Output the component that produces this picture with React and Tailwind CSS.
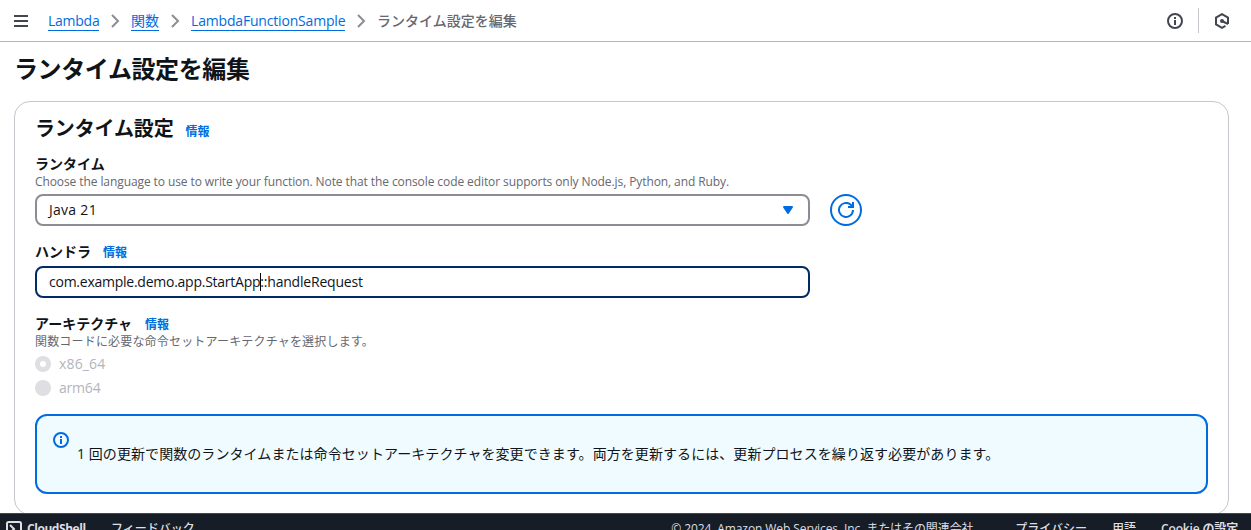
import React from 'react';

const FONT = "font-['Open_Sans','Noto_Sans_CJK_JP',sans-serif]";

function Chevron() {
  return (
    <svg width="16" height="16" viewBox="0 0 16 16" fill="none" stroke="#8c8c94" strokeWidth="2" className="shrink-0">
      <path d="M5 2l6 6-6 6" />
    </svg>
  );
}

function InfoIcon({ className }) {
  return (
    <svg width="16" height="16" viewBox="0 0 16 16" className={className} fill="none" stroke="currentColor" strokeWidth="2">
      <circle cx="8" cy="8" r="7" />
      <path d="M8 12V7M8 6V4" />
    </svg>
  );
}

function InfoLink({ className = '' }) {
  return <a className={`text-[12px] font-bold text-[#006ce0] ${className}`}>情報</a>;
}

function Crumb({ children, className }) {
  return (
    <a className={`h-5 shrink-0 whitespace-nowrap border-b border-[#006ce0] text-[#006ce0] ${className}`}>{children}</a>
  );
}

function Header() {
  return (
    <header className="flex h-[42px] shrink-0 items-center border-b border-[#b4b4bb] pr-[21px] pl-[14px]">
      <svg width="14" height="16" viewBox="0 0 14 16" stroke="#424650" strokeWidth="2">
        <path d="M0 3h14M0 8h14M0 13h14" />
      </svg>
      <nav className="ml-5 flex items-center text-[14px] leading-[19px]">
        <Crumb className="w-[51px] tracking-[-0.25px]">Lambda</Crumb>
        <div className="flex w-8 justify-center"><Chevron /></div>
        <Crumb className="w-7">関数</Crumb>
        <div className="flex w-8 justify-center"><Chevron /></div>
        <Crumb className="w-[154px] tracking-[-0.18px]">LambdaFunctionSample</Crumb>
        <div className="flex w-8 justify-center"><Chevron /></div>
        <span className="h-5 font-medium text-[#656871]">ランタイム設定を編集</span>
      </nav>
      <div className="ml-auto flex items-center">
        <InfoIcon className="text-[#424650]" />
        <div className="mx-[15px] h-[25px] w-px bg-[#c6c6cd]" />
        <svg width="16" height="16" viewBox="0 0 16 16" fill="none" stroke="#424650" strokeWidth="2">
          <path d="M14 11V4.6L8 1.2 2 4.6v6.8l6 3.4 3.4-1.9" />
          <path d="M8 8l6 3" />
          <circle cx="8" cy="8" r="1" fill="#424650" />
        </svg>
      </div>
    </header>
  );
}

function Radio({ checked, className, children }) {
  return (
    <div className="flex h-6 items-center gap-2 text-[14px] text-[#b4b4bb]">
      <span className="flex size-4 items-center justify-center rounded-full bg-[#dedee3]">
        {checked && <span className="size-1.5 rounded-full bg-white" />}
      </span>
      <span className={`pb-px ${className}`}>{children}</span>
    </div>
  );
}

function Footer() {
  return (
    <footer className="h-[17px] shrink-0 overflow-hidden border-t border-[#424650] bg-[#161d26] text-[12px] leading-4 text-[#dedee3]">
      <div className="flex h-[30px] items-center pr-[14px] pl-[6px]">
        <svg width="16" height="16" viewBox="0 0 16 16" fill="none" stroke="#dedee3" strokeWidth="2">
          <rect x="1" y="1" width="14" height="14" rx="1.5" />
          <path d="M4 4l4 4-4 4M8 12h4" />
        </svg>
        <span className="ml-[5px] w-[59px] font-bold tracking-[-0.45px] whitespace-nowrap">CloudShell</span>
        <span className="ml-[25px] font-medium">フィードバック</span>
        <div className="ml-auto flex items-center whitespace-nowrap">
          <span className="w-[302px] tracking-[-0.09px]">© 2024, Amazon Web Services, Inc. またはその関連会社</span>
          <span className="ml-[42px] font-medium">プライバシー</span>
          <span className="ml-[25px] font-medium">用語</span>
          <span className="ml-[25px] w-[76px] font-semibold tracking-[-0.15px]">Cookie の設定</span>
        </div>
      </div>
    </footer>
  );
}

export default function App() {
  return (
    <div className={`flex h-[530px] w-full flex-col overflow-hidden bg-white text-[#0f141a] ${FONT}`}>
      <Header />
      <main className="min-h-0 flex-1 overflow-hidden pr-[22px] pl-[14px]">
        <h1 className="mt-3 h-[30px] text-[24px] leading-[30px] font-bold tracking-[-0.4px]">ランタイム設定を編集</h1>
        <section className="mt-[17px] h-[414px] rounded-2xl border border-[#c6c6cd] px-5 pt-[15px]">
          <div className="flex h-6 items-baseline gap-3">
            <h2 className="text-[20px] leading-6 font-bold tracking-[-0.15px]">ランタイム設定</h2>
            <InfoLink />
          </div>
          <div className="mt-[13px] h-5 text-[14px] leading-5 font-bold">ランタイム</div>
          <p className="h-4 text-[12px] leading-4 tracking-[-0.09px] whitespace-nowrap text-[#656871]">
            Choose the language to use to write your function. Note that the console code editor supports only Node.js, Python, and Ruby.
          </p>
          <div className="mt-1 flex gap-5">
            <div className="flex h-8 w-[775px] items-center justify-between rounded-lg border-2 border-[#8c8c94] pr-[14px] pl-3 text-[14px]">
              <span className="pb-0.5 tracking-[0.28px]">Java 21</span>
              <svg width="12" height="10" viewBox="0 0 12 10" className="text-[#006ce0]">
                <path d="M2 2h8L6 8z" fill="currentColor" stroke="currentColor" strokeWidth="2" strokeLinejoin="round" />
              </svg>
            </div>
            <button className="flex size-8 items-center justify-center rounded-full border-2 border-[#006ce0] text-[#006ce0]">
              <svg width="16" height="16" viewBox="0 0 16 16" fill="none" stroke="currentColor" strokeWidth="2">
                <path d="M15 8a7 7 0 1 1-2.5-5.4L15 5" />
                <path d="M10 5h5V0" />
              </svg>
            </button>
          </div>
          <div className="mt-4 flex h-5 items-baseline gap-3 text-[14px] leading-5 font-bold">
            <span>ハンドラ</span>
            <InfoLink />
          </div>
          <div className="mt-1 flex h-8 w-[775px] items-center rounded-lg border-2 border-[#002b66] pl-3 text-[14px] tracking-[-0.25px] whitespace-nowrap">
            <span className="pb-0.5">com.example.demo.app.StartApp</span>
            <span className="-mr-px h-[18px] w-px bg-black" />
            <span className="pb-0.5 tracking-[-0.2px]">::handleRequest</span>
          </div>
          <div className="mt-4 flex h-5 items-baseline gap-[13px] text-[14px] leading-5 font-bold">
            <span>アーキテクチャ</span>
            <InfoLink />
          </div>
          <p className="h-4 text-[12px] leading-4 tracking-[0.18px] text-[#656871]">関数コードに必要な命令セットアーキテクチャを選択します。</p>
          <div className="mt-[2px]">
            <Radio checked className="tracking-[0.15px]">x86_64</Radio>
            <Radio className="tracking-[-0.2px]">arm64</Radio>
          </div>
          <div className="mt-[14px] flex h-20 rounded-xl border-2 border-[#006ce0] bg-[#f0fbff] pt-4 pl-4 text-[14px] leading-5">
            <InfoIcon className="text-[#006ce0]" />
            <p className="mt-3 ml-2 tracking-[0.07px]">1 回の更新で関数のランタイムまたは命令セットアーキテクチャを変更できます。両方を更新するには、更新プロセスを繰り返す必要があります。</p>
          </div>
        </section>
      </main>
      <Footer />
    </div>
  );
}
